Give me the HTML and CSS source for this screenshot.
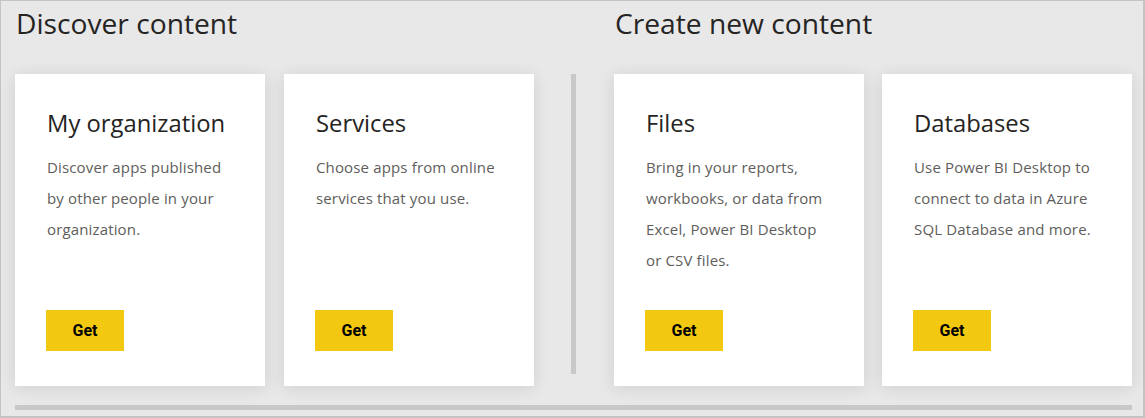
FILE: index.html
```html
<!DOCTYPE html>
<html lang="en">
<head>
<meta charset="utf-8">
<title>Get Data</title>
<link rel="stylesheet" href="styles.css">
</head>
<body>
<div class="frame">
  <div class="sections">
    <section class="section section-discover">
      <h2 class="section-title">Discover content</h2>
      <div class="cards">
        <div class="card">
          <h3 class="card-title">My organization</h3>
          <p class="card-text">Discover apps published by other people in your organization.</p>
          <button class="get-btn">Get</button>
        </div>
        <div class="card">
          <h3 class="card-title">Services</h3>
          <p class="card-text">Choose apps from online services that you use.</p>
          <button class="get-btn">Get</button>
        </div>
      </div>
    </section>
    <div class="divider"></div>
    <section class="section section-create">
      <h2 class="section-title">Create new content</h2>
      <div class="cards cards-create">
        <div class="card">
          <h3 class="card-title">Files</h3>
          <p class="card-text">Bring in your reports, workbooks, or data from Excel, Power BI Desktop or CSV files.</p>
          <button class="get-btn">Get</button>
        </div>
        <div class="card">
          <h3 class="card-title">Databases</h3>
          <p class="card-text">Use Power BI Desktop to connect to data in Azure SQL Database and more.</p>
          <button class="get-btn">Get</button>
        </div>
      </div>
    </section>
  </div>
  <div class="scrollbar"></div>
</div>
</body>
</html>
```
FILE: styles.css
```css
html, body {
  margin: 0;
  padding: 0;
}
body {
  font-family: "Open Sans", "Noto Sans", sans-serif;
  background: #e8e8e8;
}
.frame {
  box-sizing: border-box;
  width: 1145px;
  height: 418px;
  border: 1px solid #c4c4c4;
  border-right-width: 2px;
  border-bottom-width: 2px;
  background: #e8e8e8;
  padding: 0 0 0 14px;
  display: flex;
  flex-direction: column;
}
.sections {
  display: flex;
  align-items: flex-start;
}
.section-title {
  margin: 0;
  height: 73px;
  padding-top: 4px;
  box-sizing: border-box;
  font-size: 28.2px;
  font-weight: 400;
  line-height: 36px;
  color: #252423;
  padding-left: 1px;
}
.cards {
  display: flex;
  gap: 19px;
}
.cards-create {
  gap: 18px;
}
.card {
  box-sizing: border-box;
  width: 250px;
  height: 312px;
  background: #fff;
  box-shadow: 0 2px 16px rgba(0, 0, 0, 0.11);
  padding: 34px 32px 35px 32px;
  display: flex;
  flex-direction: column;
  align-items: flex-start;
}
.card-title {
  margin: 0;
  font-size: 23.8px;
  font-weight: 400;
  line-height: 30px;
  color: #252423;
}
.card-text {
  margin: 14px 0 0;
  font-size: 15px;
  line-height: 31px;
  letter-spacing: 0.15px;
  color: #605e5c;
}
.get-btn {
  margin-top: auto;
  width: 78px;
  height: 41px;
  border: 0;
  background: #f2c811;
  color: #000;
  font-family: Roboto, "Liberation Sans", sans-serif;
  font-weight: 700;
  font-size: 16px;
  padding: 0;
  margin-left: -1px;
}
.divider {
  width: 5px;
  height: 300px;
  margin: 73px 38px 0 37px;
  background: #c8c8c8;
}
.scrollbar {
  margin-top: 19px;
  width: 1117px;
  height: 5px;
  background: #c8c8c8;
}
```
